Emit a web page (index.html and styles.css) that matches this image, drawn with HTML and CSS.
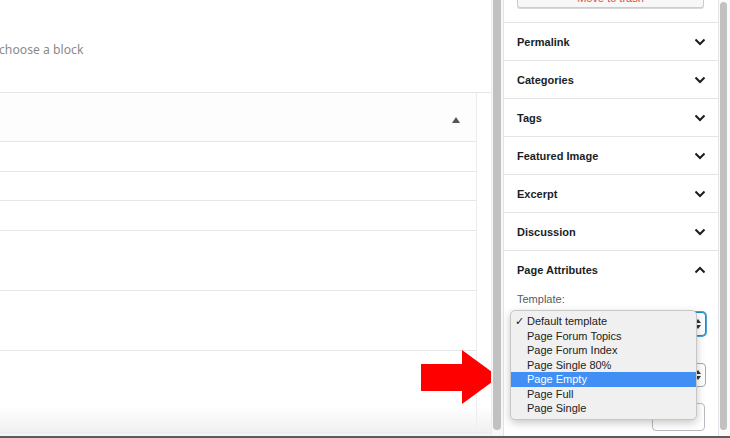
FILE: index.html
```html
<!DOCTYPE html>
<html>
<head>
<meta charset="utf-8">
<link rel="stylesheet" href="styles.css">
</head>
<body>
<div class="screen">
  <div class="main">
    <div class="placeholder"><span class="ph-text">choose a block</span></div>
    <div class="metabox">
      <div class="mb-header">
        <svg class="tri" width="8" height="6" viewBox="0 0 8 6"><polygon points="4,0 8,6 0,6" fill="#555"/></svg>
      </div>
      <div class="mb-table">
        <div class="row r30"></div>
        <div class="row r29"></div>
        <div class="row r30"></div>
        <div class="row r60"></div>
        <div class="row r60"></div>
        <div class="row rlast"></div>
      </div>
    </div>
    <div class="main-fade"></div>
    <svg class="arrow" width="78" height="55" viewBox="0 0 78 55"><polygon points="0,14 41,14 41,0 78,27 41,54 41,41 0,41" fill="#ff0000"/></svg>
  </div>
  <div class="scroll"><div class="thumb thumb-left"></div></div>
  <div class="sidebar">
    <div class="top-actions"><div class="trash-btn">Move to trash</div></div>
    <div class="panel"><span class="p-title">Permalink</span><svg class="chev" width="12" height="8" viewBox="0 0 12 8"><path d="M1.5 1.5 L6 6 L10.5 1.5" fill="none" stroke="#191e23" stroke-width="2"/></svg></div>
    <div class="panel"><span class="p-title">Categories</span><svg class="chev" width="12" height="8" viewBox="0 0 12 8"><path d="M1.5 1.5 L6 6 L10.5 1.5" fill="none" stroke="#191e23" stroke-width="2"/></svg></div>
    <div class="panel"><span class="p-title">Tags</span><svg class="chev" width="12" height="8" viewBox="0 0 12 8"><path d="M1.5 1.5 L6 6 L10.5 1.5" fill="none" stroke="#191e23" stroke-width="2"/></svg></div>
    <div class="panel"><span class="p-title">Featured Image</span><svg class="chev" width="12" height="8" viewBox="0 0 12 8"><path d="M1.5 1.5 L6 6 L10.5 1.5" fill="none" stroke="#191e23" stroke-width="2"/></svg></div>
    <div class="panel"><span class="p-title">Excerpt</span><svg class="chev" width="12" height="8" viewBox="0 0 12 8"><path d="M1.5 1.5 L6 6 L10.5 1.5" fill="none" stroke="#191e23" stroke-width="2"/></svg></div>
    <div class="panel"><span class="p-title">Discussion</span><svg class="chev" width="12" height="8" viewBox="0 0 12 8"><path d="M1.5 1.5 L6 6 L10.5 1.5" fill="none" stroke="#191e23" stroke-width="2"/></svg></div>
    <div class="panel open"><span class="p-title">Page Attributes</span><svg class="chev" width="12" height="8" viewBox="0 0 12 8"><path d="M1.5 6.5 L6 2 L10.5 6.5" fill="none" stroke="#191e23" stroke-width="2"/></svg></div>
    <div class="panel-body">
      <div class="label">Template:</div>
      <div class="select focus"><svg class="updown" width="6" height="10" viewBox="0 0 6 10"><polygon points="3,0 6,4 0,4" fill="#333"/><polygon points="0,6 6,6 3,10" fill="#333"/></svg></div>
      <div class="select second"><svg class="updown" width="6" height="10" viewBox="0 0 6 10"><polygon points="3,0 6,4 0,4" fill="#333"/><polygon points="0,6 6,6 3,10" fill="#333"/></svg></div>
      <div class="order-row"><div class="order-input"></div></div>
      <div class="popup">
        <div class="item"><span class="check">✓</span>Default template</div>
        <div class="item"><span class="check"></span>Page Forum Topics</div>
        <div class="item"><span class="check"></span>Page Forum Index</div>
        <div class="item"><span class="check"></span>Page Single 80%</div>
        <div class="item active"><span class="check"></span>Page Empty</div>
        <div class="item"><span class="check"></span>Page Full</div>
        <div class="item"><span class="check"></span>Page Single</div>
      </div>
    </div>
  </div>
  <div class="scroll right"><div class="thumb thumb-right"></div></div>
</div>
</body>
</html>
```

FILE: styles.css
```css
html, body {
  margin: 0;
  padding: 0;
  background: #fff;
}
body {
  width: 730px;
  height: 438px;
  overflow: hidden;
  font-family: "Liberation Sans", Arial, sans-serif;
}
.screen {
  display: flex;
  height: 436px;
  border-bottom: 2px solid #5c5c5c;
  overflow: hidden;
}
.main {
  position: relative;
  width: 491px;
  border-right: 1px solid #ececec;
  flex: none;
  overflow: hidden;
}
.placeholder {
  border-bottom: 1px solid #e6e6e6;
  box-sizing: border-box;
  height: 93px;
  padding-top: 42px;
}
.ph-text {
  font-family: "Noto Sans", "Open Sans", sans-serif;
  font-size: 12.2px;
  color: #8a8a8a;
  line-height: 16px;
  margin-left: -1px;
  display: block;
}
.metabox {
  width: 476px;
  border-right: 1px solid #ececec;
  height: 343px;
  background: #fdfdfd;
}
.mb-header {
  height: 48px;
  display: flex;
  justify-content: flex-end;
  align-items: center;
  padding-right: 16px;
  padding-top: 6px;
  box-sizing: border-box;
}
.tri { display: block; }
.mb-table {
  background: #fff;
}
.row {
  border-top: 1px solid #e6e6e6;
  box-sizing: border-box;
}
.r30 { height: 30px; }
.r29 { height: 29px; }
.r60 { height: 60px; }
.rlast { height: 90px; }
.main-fade {
  position: absolute;
  left: 0;
  right: 0;
  bottom: 0;
  height: 30px;
  background: linear-gradient(to bottom, rgba(255,255,255,0), #f0f0f0 88%, #dcdcdc 90%, #f4f4f4 92%, #f4f4f4);
}
.arrow {
  position: absolute;
  left: 421px;
  top: 350px;
  z-index: 5;
}
.scroll {
  width: 11px;
  flex: none;
  background: #f7f7f7;
}
.thumb {
  background: #c1c1c1;
  border-radius: 4px;
}
.thumb-left {
  width: 8px;
  margin-left: 1px;
  height: 430px;
  border-radius: 0 0 4px 4px;
}
.thumb-right {
  width: 7px;
  margin-left: 1px;
  margin-top: 2px;
  height: 428px;
}
.scroll.right { background: #fafafa; }
.sidebar {
  position: relative;
  width: 214px;
  flex: none;
  border-left: 1px solid #e2e4e7;
  border-right: 1px solid #e2e4e7;
  background: #fff;
}
.top-actions {
  height: 23px;
  box-sizing: border-box;
  border-bottom: 1px solid #e2e4e7;
  padding: 0 13px 14px;
  display: flex;
  align-items: flex-end;
}
.trash-btn {
  flex: none;
  height: 24px;
  border: 1px solid #cccccc;
  border-radius: 3px;
  background: #f7f7f7;
  box-shadow: 0 1px 0 #d8d8d8;
  color: #d94f4f;
  font-size: 11px;
  line-height: 31px;
  text-align: center;
  width: 185px;
  overflow: hidden;
}
.panel {
  height: 38px;
  box-sizing: border-box;
  border-bottom: 1px solid #e2e4e7;
  display: flex;
  align-items: center;
  justify-content: space-between;
  padding: 0 12px 0 13px;
}
.panel.open { border-bottom: none; height: 38px; }
.p-title {
  font-size: 11px;
  font-weight: bold;
  color: #191e23;
}
.chev { display: block; }
.panel-body {
  position: relative;
  padding: 3px 12px 0 13px;
}
.label {
  font-size: 11px;
  color: #555d66;
  line-height: 14px;
  height: 20px;
}
.select {
  height: 24px;
  box-sizing: border-box;
  border: 1px solid #8d96a0;
  border-radius: 4px;
  display: flex;
  justify-content: flex-end;
  align-items: center;
  padding-right: 4px;
  background: #fff;
}
.select.focus {
  border-color: #1e8cbe;
  box-shadow: 0 0 0 1px #4aa3d6;
}
.select.second {
  margin-top: 27px;
  border-color: #a7aaad;
}
.updown { display: block; }
.order-row {
  display: flex;
  justify-content: flex-end;
  margin-top: 16px;
}
.order-input {
  width: 53px;
  height: 28px;
  box-sizing: border-box;
  border: 1px solid #b8bcc0;
  border-radius: 4px;
  margin-right: 1px;
}
.popup {
  position: absolute;
  left: 6px;
  top: 21px;
  width: 187px;
  box-sizing: border-box;
  padding: 3px 0 3px;
  background: #f0f0f0;
  border: 1px solid #c6c6c6;
  border-radius: 5px;
  box-shadow: 0 3px 8px rgba(0,0,0,0.22);
  z-index: 4;
}
.item {
  font-size: 11px;
  line-height: 14.5px;
  height: 14.5px;
  color: #222;
  padding-left: 4px;
  white-space: nowrap;
}
.check {
  display: inline-block;
  width: 12px;
}
.item.active {
  background: #418ef5;
  color: #fff;
}
```
